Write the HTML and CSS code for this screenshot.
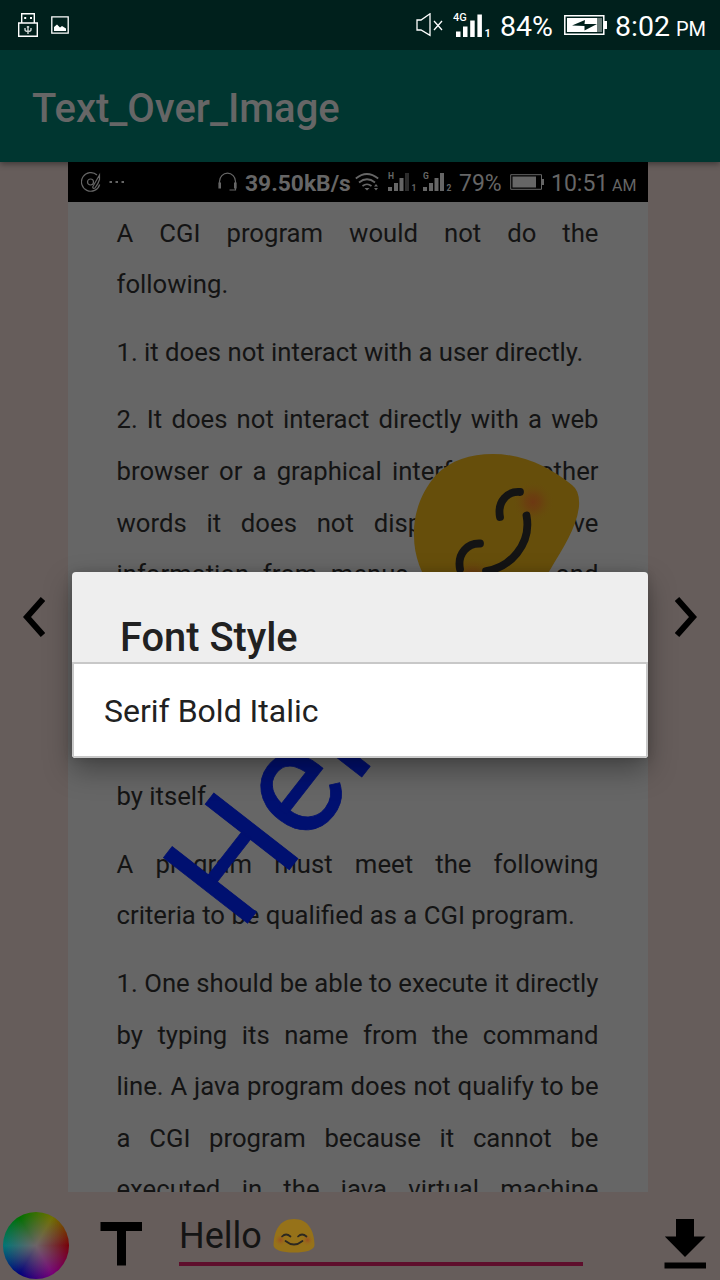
FILE: index.html
```html
<!DOCTYPE html>
<html lang="en">
<head>
<meta charset="utf-8">
<title>Text_Over_Image</title>
<link rel="stylesheet" href="styles.css">
</head>
<body>
<div class="screen">
  <header class="status">
    <svg class="usb" width="20" height="24" viewBox="0 0 20 24" fill="none" stroke="#fff" stroke-width="1.4"><path d="M3.7 10V.7h12.6V10M.7 10h18.6v13.3H.7z"/><path d="M6.2 5h2M12 5h2" stroke-width="1.8"/><path d="M10 13v8M7 15v1.500Q7 18.500 10 18.500t3-2V15M8.800 14h2.400" stroke="#cdd5d3"/></svg>
    <svg class="photo" width="18" height="18" viewBox="0 0 18 18"><path d="M.8.8h16.400v16.400H.8z" fill="none" stroke="#fff" stroke-width="1.300"/><path d="M3 15v-4l3-2.500 3 3 2-1.500 4 2.500V15z" fill="#fff"/></svg>
    <span class="push"></span>
    <svg class="mute" width="28" height="24" viewBox="0 0 28 24" fill="none" stroke="#fff" stroke-width="1.300"><path d="M1 7h4l9-6.200v21.500L5 17H1zM18 8l8 9M26 8l-8 9"/></svg>
    <svg class="cell" width="38" height="27" viewBox="0 0 38 27" fill="#fff"><text x="0" y="9" font-size="11" font-weight="500">4G</text><path d="M3 19.500h4.500V25H3zM10 14.500h4.500V25H10zM17.200 8.500h4.500V25h-4.500zM24.400 2.500h4.500V25h-4.500z"/><text x="31.500" y="25" font-size="11" font-weight="700">1</text></svg>
    <span class="pct">84%</span>
    <svg class="battery" width="43" height="21" viewBox="0 0 43 21"><path d="M.8.8h39v18.400h-39z" fill="none" stroke="#fff" stroke-width="1.500"/><path d="M3 3h30v14H3z" fill="#fff"/><path d="M33 3h5v14h-5z" fill="#6b7c79"/><path d="M40 6h3v8h-3z" fill="#fff"/><path d="M8 10.500l13-5.500-.5 4H33l-12.500 6.500v-4.500z" fill="#00201c"/></svg>
    <span class="clock">8:02</span><span class="ampm">PM</span>
  </header>
  <div class="appbar"><h1>Text_Over_Image</h1></div>

  <main class="stage">
    <div class="side"><svg width="22" height="40" viewBox="0 0 22 40"><path d="M20 2L4 20l16 18" fill="none" stroke="#000" stroke-width="6"/></svg></div>
    <section class="photo-page">
      <div class="shot-status">
        <svg class="disc" width="20" height="20" viewBox="0 0 20 20" fill="none" stroke="#666" stroke-width="1.200"><path d="M16 3A9.300 9.300 0 1 0 18.700 12.500M18.500 3v4.500q-1 4-4.500 8.500c-2 1-3-.5-1.500-2.500z"/><circle cx="9.500" cy="10" r="3"/></svg>
        <svg class="dots" width="16" height="4" viewBox="0 0 16 4" fill="#666"><path d="M.5 1h2.500v2H.5zM6.500 1H9v2H6.500zM12.500 1H15v2h-2.500z"/></svg>
        <span class="push"></span>
        <svg class="phones" width="19" height="20" viewBox="0 0 19 20" fill="none" stroke="#666"><path d="M1.500 12V9.500a8 8.300 0 0 1 16 0V18h-6" stroke-width="1.200"/><path d="M1.700 10.500v6M17.300 10.500v6" stroke-width="2.600"/></svg>
        <span class="rate">39.50kB/s</span>
        <svg class="wifi" width="24" height="18" viewBox="0 0 24 18" fill="none" stroke="#666" stroke-width="1.700"><path d="M.8 5.500q11-9 22.400 0M4 9.500q8-6.500 16 0M7.500 13q4.500-3.500 9 0"/><path d="M9.500 15l2.500 2.500 2.500-2.500zM19 13.500l2-2.500 2 2.500zM19 15l2 2.500 2-2.500z" fill="#666" stroke="none"/></svg>
        <svg class="sim" width="28" height="20" viewBox="0 0 28 20" fill="#666"><text x="0" y="7" font-size="8.500" font-weight="700">H</text><path d="M0 15h4v4H0zM6 11h4v8H6zM11.500 6h4v13h-4z"/><path d="M17 1h4v18h-4z" fill="#2c2c2c"/><text x="23.500" y="19" font-size="8.500" font-weight="700">1</text></svg>
        <svg class="sim2" width="29" height="20" viewBox="0 0 29 20" fill="#666"><text x="0" y="7" font-size="8.500" font-weight="700">G</text><path d="M0 15h4v4H0zM6 11h4v8H6zM11.500 6h4v13h-4zM17 1h4v18h-4z"/><text x="23.500" y="19" font-size="8.500" font-weight="700">2</text></svg>
        <span class="pct2">79%</span>
        <svg class="bat2" width="34" height="16" viewBox="0 0 34 16"><path d="M.7.7h30.800v14.600H.7z" fill="none" stroke="#666"/><path d="M2.500 2.500H26v11H2.500z" fill="#666"/><path d="M31.500 5H34v6h-2.500z" fill="#666"/></svg>
        <span class="clock2">10:51</span><span class="ampm2">AM</span>
      </div>
      <article class="doc">
        <p><span class="full">A CGI program would not do the</span><span>following.</span></p>
        <p><span>1. it does not interact with a user directly.</span></p>
        <p class="tall"><span class="full">2. It does not interact directly with a web</span><span class="full">browser or a graphical interface, in other</span><span class="full">words it does not display or receive</span><span class="full">information from menus, checklists and</span></p>
        <p class="end"><span>by itself.</span></p>
        <p><span class="full">A program must meet the following</span><span>criteria to be qualified as a CGI program.</span></p>
        <p><span class="full">1. One should be able to execute it directly</span><span class="full">by typing its name from the command</span><span class="full">line. A java program does not qualify to be</span><span class="full">a CGI program because it cannot be</span><span class="full">executed in the java virtual machine</span></p>
      </article>
      <svg class="sticker" width="580" height="1030" viewBox="68 162 580 1030">
        <defs>
          <radialGradient id="blush"><stop offset="0" stop-color="#6d3812"/><stop offset=".35" stop-color="#6b3e10" stop-opacity=".85"/><stop offset="1" stop-color="#664e0d" stop-opacity="0"/></radialGradient>
        </defs>
        <text class="hello" transform="translate(240.100 933.100) rotate(-52.100)">Hello</text>
        <path d="M414 536C413 515 421 492 436 475C451 460 470 454 493 454C524 454 551 468 572 485Q580 491 579 506C577 527 563 548 550 570L535 592H436C421 577 414 555 414 536Z" fill="#664e0b"/>
        <circle cx="533" cy="502" r="21" fill="url(#blush)"/><circle cx="473" cy="578" r="21" fill="url(#blush)"/>
        <path d="M500 517C497 501 508 491 520 492M460 569C457 553 468 543 480 543.500M526.500 515.500C532 545 509 568 486 571" fill="none" stroke="#141414" stroke-width="7.800" stroke-linecap="round"/>
      </svg>
    </section>
    <div class="side right"><svg width="22" height="40" viewBox="0 0 22 40"><path d="M2 2l16 18L2 38" fill="none" stroke="#000" stroke-width="6"/></svg></div>
  </main>

  <footer class="tools">
    <div class="wheel"></div>
    <svg class="tee" width="42" height="44" viewBox="0 0 42 44"><path d="M.5 0H42v9H26v34.500h-9V9H.5z"/></svg>
    <div class="field"><span>Hello</span>
      <svg width="42" height="36" viewBox="0 0 42 36"><defs><radialGradient id="cheek"><stop offset="0" stop-color="#9a4f20"/><stop offset="1" stop-color="#9a6a1c" stop-opacity="0"/></radialGradient></defs><path d="M.5 27C1 12 7 1 21 1s20 11 20.500 26C41.500 32 33 34.500 21 34.500S.5 32 .5 27z" fill="#967219"/><circle cx="7.500" cy="22" r="6" fill="url(#cheek)"/><circle cx="34.500" cy="22" r="6" fill="url(#cheek)"/><path d="M9 18.500q4-4 8.500 0M25 18.500q4-4 8.500 0M12.500 23q8.500 7 17 0" fill="none" stroke="#2c2821" stroke-width="1.700" stroke-linecap="round"/></svg>
    </div>
    <svg class="download" width="42" height="50" viewBox="0 0 42 50"><path d="M12 0h18v17.500h11.500L21 38 .8 17.500H12zM.5 43.500h41.500v6H.5z"/></svg>
  </footer>

  <div class="dialog">
    <h2>Font Style</h2>
    <div class="option">Serif Bold Italic</div>
  </div>
</div>
</body>
</html>
```
FILE: styles.css
```css
* { box-sizing: border-box; }
body { margin: 0; font-family: Roboto, sans-serif; }
svg { display: block; flex: none; }
svg text { font-family: Roboto, sans-serif; }
h1, h2, p { margin: 0; font-weight: 500; }
.screen { position: relative; width: 720px; height: 1280px; overflow: hidden; background: #665d5b; display: flex; flex-direction: column; }
.push { flex: 1; }

.status { height: 50px; flex: none; display: flex; align-items: center; background: #00201c; color: #fff; padding: 0 16px 0 18px; white-space: nowrap; }
.photo { margin-left: 13px; }
.mute { width: 28px; margin-right: 9px; }
.cell { margin-right: 9px; }
.pct { width: 64px; font-size: 28.5px; padding-top: 3px; }
.battery { width: 43px; margin-right: 8px; }
.clock { width: 61px; font-size: 28.5px; padding-top: 3px; }
.ampm { width: 28px; font-size: 20px; padding-top: 8px; }

.appbar { height: 112px; flex: none; background: #003630; display: flex; align-items: center; padding: 6px 0 0 32px; box-shadow: 0 2px 6px rgba(0,0,0,.4); z-index: 1; clip-path: inset(0 0 -10px 0); }
.appbar h1 { font-size: 40px; line-height: 48px; color: #666; }

.stage { height: 1030px; flex: none; display: flex; }
.side { width: 68px; flex: none; padding: 435px 0 0 23px; }
.side.right { width: 72px; padding-left: 27px; }
.photo-page { position: relative; width: 580px; height: 1030px; overflow: hidden; background: #666; color: #141414; z-index: 2; }

.shot-status { height: 40px; display: flex; align-items: center; background: #000; color: #666; padding: 0 12px 0 13px; white-space: nowrap; }
.dots { margin-left: 8px; }
.phones { margin-right: 8px; }
.rate { width: 110px; font-size: 22.8px; font-weight: 700; padding-top: 3px; }
.wifi { margin-right: 9px; }
.sim { margin-right: 7px; }
.sim2 { margin-right: 7px; }
.pct2 { width: 51px; font-size: 23px; padding-top: 3px; }
.bat2 { margin-right: 7px; }
.clock2 { width: 61px; font-size: 23px; padding-top: 3px; }
.ampm2 { width: 24px; font-size: 16px; padding-top: 7px; }

.doc { padding: 5.6px 49.500px 0 48.500px; font-size: 25.7px; }
.doc p { font-weight: 400; margin-bottom: 16px; }
.doc span { display: block; line-height: 51.6px; height: 51.6px; white-space: nowrap; }
.doc .full { text-align: justify; text-align-last: justify; white-space: normal; }
.doc .tall { margin-bottom: 170.4px; }
.doc .end { margin-bottom: 16px; }
.sticker { position: absolute; left: 0; top: 0; }
.hello { font-size: 150px; fill: #001070; stroke: #001070; stroke-width: .8px; }

.tools { flex: 1; display: flex; align-items: flex-start; }
.wheel { width: 66px; height: 67px; margin: 20px 0 0 3px; border-radius: 50%; background: radial-gradient(circle, #6d6468 0%, rgba(109,100,104,0) 70%), conic-gradient(from 90deg, #780008, #780078, #00007c, #007676, #007000, #707000, #780008); }
.tee { margin: 30px 0 0 31px; }
.field { width: 404px; height: 74px; margin-left: 37px; padding-top: 18px; display: flex; align-items: flex-start; font-size: 36px; line-height: 52px; color: #141414; border-bottom: 4px solid #5e0e2c; }
.field svg { margin: 8px 0 0 11px; }
.download { margin: 27px 0 0 81px; }

.dialog { position: absolute; left: 72px; top: 572px; width: 576px; height: 186px; border-radius: 4px; overflow: hidden; background: #eee; color: #212121; box-shadow: 0 12px 28px rgba(0,0,0,.34), 0 0 10px rgba(0,0,0,.14); z-index: 3; }
.dialog h2 { height: 90px; padding: 41px 0 0 48px; font-size: 39.8px; line-height: 50px; }
.option { height: 96px; background: #fff; border: 2px solid #c8c8c8; padding: 0 30px; font-size: 32px; line-height: 94px; }
```
